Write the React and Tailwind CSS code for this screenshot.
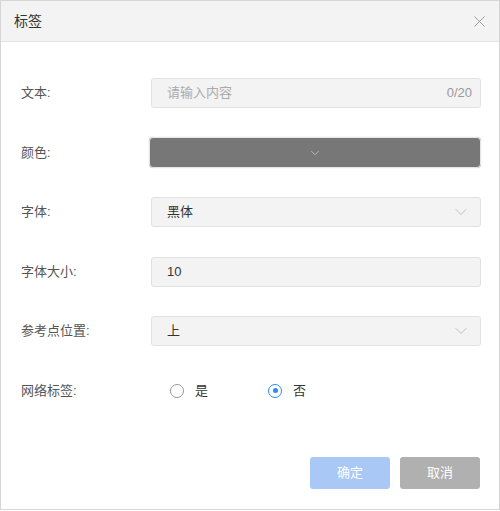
import { ChevronDown, X } from 'lucide-react';

const font = { fontFamily: '"Liberation Sans", "Noto Sans CJK SC", sans-serif' };

function Row({ label, children }) {
  return (
    <div className="flex h-[30px] items-center">
      <div className="w-[130px] shrink-0 text-[13px] text-[#555]">{label}</div>
      <div className="min-w-0 flex-1">{children}</div>
    </div>
  );
}

function Field({ children, chevron }) {
  return (
    <div className="flex h-[30px] items-center justify-between rounded-[3px] border border-[#e2e2e6] bg-[#f3f3f4] pl-[15px] pr-[9px] text-[13px] text-[#333]">
      <span>{children}</span>
      {chevron && <ChevronDown size={20} strokeWidth={1} className="text-[#b5b5b5]" />}
    </div>
  );
}

function Radio({ checked, label }) {
  return (
    <label className="flex items-center gap-[11px] text-[13px] text-[#333]">
      <span
        className={`flex h-[14px] w-[14px] items-center justify-center rounded-full border ${
          checked ? 'border-[#2d8cf0]' : 'border-[#9a9a9a]'
        }`}
      >
        {checked && <span className="h-[5px] w-[5px] rounded-full bg-[#2d8cf0]" />}
      </span>
      {label}
    </label>
  );
}

export default function App() {
  return (
    <div style={font} className="h-[511px] w-[500px] bg-white">
      <div className="flex h-[510px] flex-col border border-[#d6d6d6]">
        <header className="flex h-[41px] shrink-0 items-center justify-between border-b border-[#e4e4e4] bg-[#f3f3f3] pl-[13px] pr-[10px]">
          <h2 className="text-[14px] text-[#333]">标签</h2>
          <X size={19} strokeWidth={1} className="text-[#888]" />
        </header>
        <div className="flex flex-col gap-[29.5px] pl-[20px] pr-[18px] pt-[36px]">
          <Row label="文本:">
            <div className="flex h-[30px] items-center justify-between rounded-[3px] border border-[#e2e2e6] bg-[#f3f3f4] pl-[15px] pr-[8px] text-[13px]">
              <span className="text-[#aaa]">请输入内容</span>
              <span className="text-[#999]">0/20</span>
            </div>
          </Row>
          <Row label="颜色:">
            <div className="-ml-[2px] flex h-[31px] items-center justify-center rounded-[4px] border border-[#e6e6e6] bg-[#777777] shadow-[0_0_1px_rgba(0,0,0,0.3)]">
              <ChevronDown size={14} strokeWidth={1.2} className="text-[#cfcfcf]" />
            </div>
          </Row>
          <Row label="字体:">
            <Field chevron>黑体</Field>
          </Row>
          <Row label="字体大小:">
            <Field>10</Field>
          </Row>
          <Row label="参考点位置:">
            <Field chevron>上</Field>
          </Row>
          <Row label="网络标签:">
            <div className="flex items-center gap-[60px] pl-[19px]">
              <Radio label="是" />
              <Radio checked label="否" />
            </div>
          </Row>
        </div>
        <div className="mt-auto flex justify-end gap-[10px] pb-[20px] pr-[19px]">
          <button className="h-[32px] w-[80px] rounded-[3px] bg-[#a9c8f5] text-[13px] text-white">确定</button>
          <button className="h-[32px] w-[80px] rounded-[3px] bg-[#b0b0b0] text-[13px] text-white">取消</button>
        </div>
      </div>
    </div>
  );
}
